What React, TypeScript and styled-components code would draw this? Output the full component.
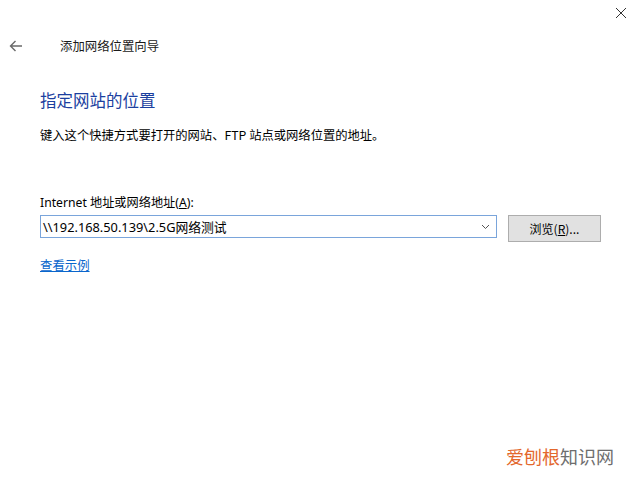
import React from "react";
import styled, { createGlobalStyle } from "styled-components";

const GlobalStyle = createGlobalStyle`
  html, body {
    margin: 0;
    padding: 0;
    background: #ffffff;
  }
  body {
    font-family: "Noto Sans", "Noto Sans CJK SC", sans-serif;
    color: #000000;
  }
`;

const Window = styled.div`
  position: relative;
  width: 640px;
  height: 477px;
  background: #ffffff;
  overflow: hidden;
`;

const TitleBar = styled.div`
  display: flex;
  justify-content: flex-end;
  height: 28px;
  padding: 0 12px 0 0;
`;

const CloseButton = styled.div`
  display: flex;
  align-items: center;
  justify-content: center;
  width: 14px;
  height: 26px;
`;

const Header = styled.div`
  display: flex;
  align-items: center;
  height: 24px;
  margin-top: 6px;
`;

const BackArrow = styled.div`
  display: flex;
  align-items: center;
  width: 51px;
  padding-left: 9px;
`;

const HeaderTitle = styled.span`
  font-size: 12.4px;
  color: #1a1a1a;
  font-family: "Noto Sans CJK SC", sans-serif;
`;

const Content = styled.div`
  padding: 0 39px 0 40px;
`;

const Heading = styled.h1`
  margin: 31px 0 0;
  font-size: 16.5px;
  line-height: 22px;
  font-weight: 400;
  color: #1b3f9f;
  font-family: "Noto Sans CJK SC", sans-serif;
`;

const Description = styled.p`
  margin: 15px 0 0;
  font-size: 12.3px;
  line-height: 18px;
  font-family: "Noto Sans CJK SC", sans-serif;
`;

const Label = styled.div`
  margin-top: 50px;
  font-size: 12.2px;
  line-height: 18px;
  font-family: "Noto Sans", "Noto Sans CJK SC", sans-serif;
`;

const Key = styled.span`
  text-decoration: underline;
`;

const InputRow = styled.div`
  display: flex;
  align-items: flex-start;
  gap: 11px;
  margin-top: 3px;
`;

const ComboBox = styled.div`
  display: flex;
  align-items: center;
  width: 457px;
  height: 23px;
  box-sizing: border-box;
  border: 1px solid #7aa5db;
  background: #ffffff;
  padding: 0 6px 0 2px;
`;

const ComboText = styled.span`
  flex: 1;
  font-size: 12.8px;
  line-height: 20px;
  font-family: "Noto Sans", "Noto Sans CJK SC", sans-serif;
  white-space: nowrap;
`;

const Chevron = styled.svg`
  width: 9px;
  height: 6px;
`;

const BrowseButton = styled.button`
  width: 93px;
  height: 27px;
  box-sizing: border-box;
  border: 1px solid #adadad;
  background: #e1e1e1;
  font-size: 12px;
  font-family: "Noto Sans CJK SC", sans-serif;
  color: #000000;
  padding: 0;
`;

const ExampleLink = styled.a`
  display: inline-block;
  margin-top: 14px;
  font-size: 12.4px;
  line-height: 18px;
  color: #0a66cc;
  text-decoration: underline;
  font-family: "Noto Sans CJK SC", sans-serif;
`;

const Watermark = styled.div`
  position: absolute;
  right: 26px;
  bottom: 8px;
  font-size: 18px;
  font-family: "Noto Sans CJK SC", sans-serif;
  color: #6e6e6e;
`;

const Accent = styled.span`
  color: #e3672c;
`;

export default function App() {
  return (
    <Window>
      <GlobalStyle />
      <TitleBar>
        <CloseButton>
          <svg width="12" height="12" viewBox="0 0 12 12">
            <path d="M1 1 L11 11 M11 1 L1 11" stroke="#333" strokeWidth="1" fill="none" />
          </svg>
        </CloseButton>
      </TitleBar>
      <Header>
        <BackArrow>
          <svg width="14" height="12" viewBox="0 0 14 12">
            <path d="M13 6 H1.5 M6.5 1 L1.5 6 L6.5 11" stroke="#6a6a6a" strokeWidth="1.4" fill="none" />
          </svg>
        </BackArrow>
        <HeaderTitle>添加网络位置向导</HeaderTitle>
      </Header>
      <Content>
        <Heading>指定网站的位置</Heading>
        <Description>键入这个快捷方式要打开的网站、FTP 站点或网络位置的地址。</Description>
        <Label>
          Internet 地址或网络地址(<Key>A</Key>):
        </Label>
        <InputRow>
          <ComboBox>
            <ComboText>\\192.168.50.139\2.5G网络测试</ComboText>
            <Chevron viewBox="0 0 9 6">
              <path d="M1 1 L4.5 4.5 L8 1" stroke="#555" strokeWidth="1" fill="none" />
            </Chevron>
          </ComboBox>
          <BrowseButton>
            浏览(<Key>R</Key>)...
          </BrowseButton>
        </InputRow>
        <ExampleLink>查看示例</ExampleLink>
      </Content>
      <Watermark>
        <Accent>爱刨根</Accent>知识网
      </Watermark>
    </Window>
  );
}
